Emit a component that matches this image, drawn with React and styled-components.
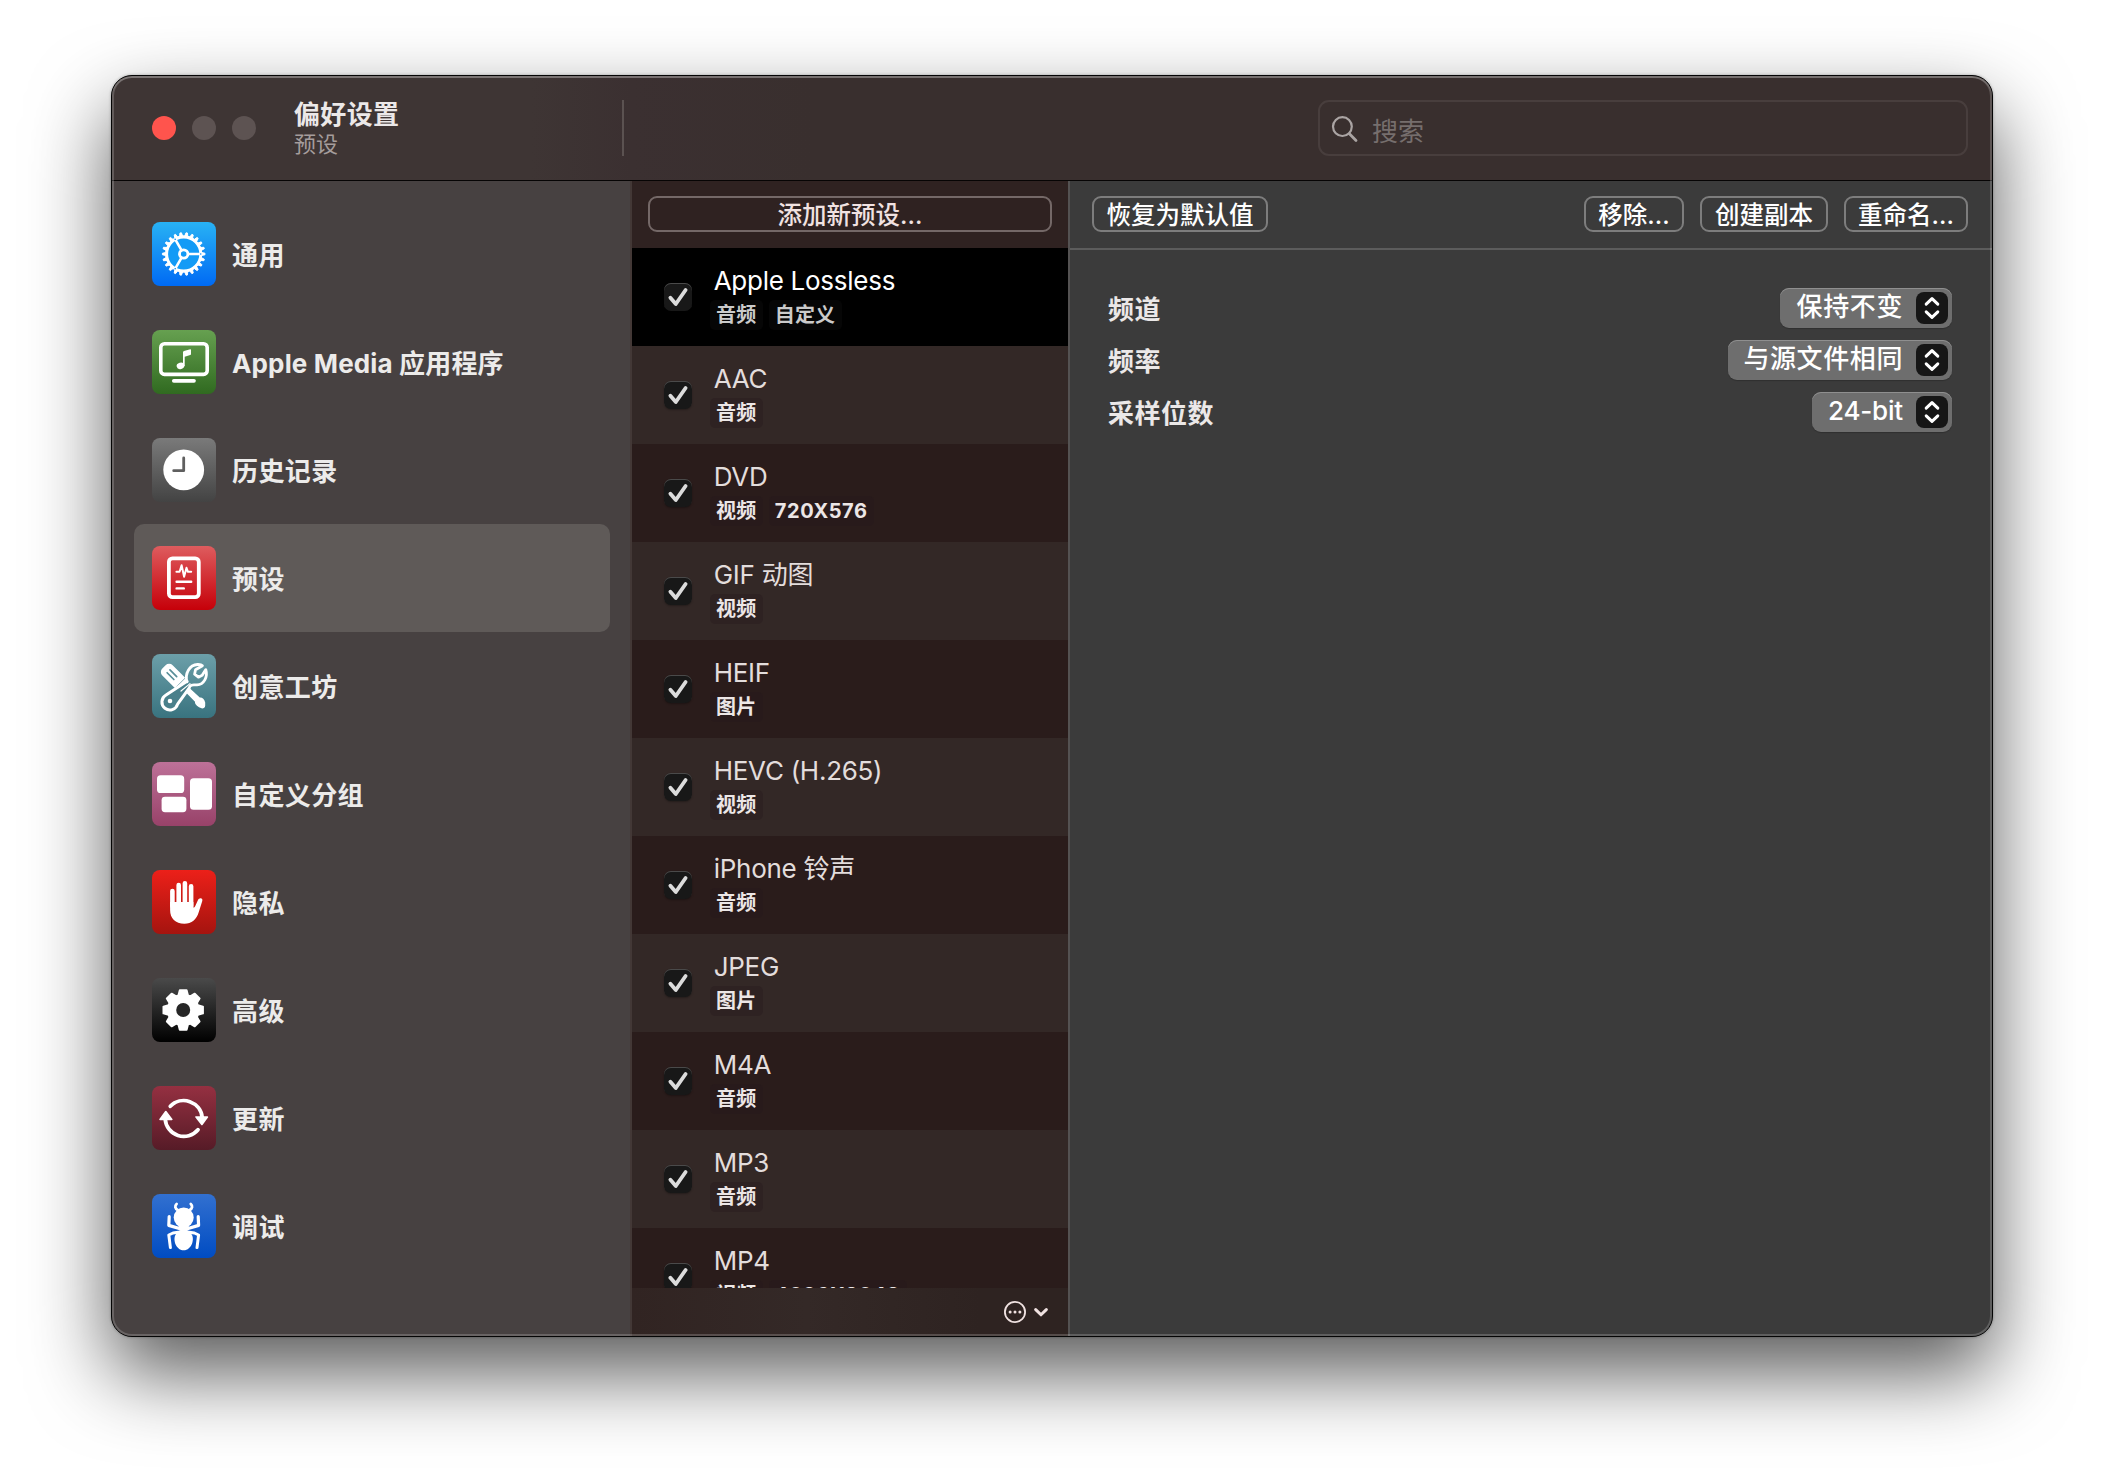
import React from 'react';
import styled, { createGlobalStyle } from 'styled-components';

const GlobalStyle = createGlobalStyle`
  *, *::before, *::after { box-sizing: border-box; }
  body {
    margin: 0;
    background: #fff;
    font-family: Inter, 'Noto Sans CJK SC', sans-serif;
    color: #ebe8e8;
    -webkit-font-smoothing: antialiased;
  }
  button { font-family: inherit; margin: 0; }
`;

const Desktop = styled.main`
  width: 2104px;
  height: 1484px;
  padding: 75px 111px 0;
  overflow: hidden;
`;

const Window = styled.div`
  position: relative;
  display: flex;
  flex-direction: column;
  width: 1882px;
  height: 1262px;
  border: 1px solid #050505;
  border-radius: 21px;
  overflow: hidden;
  background: #3b3b3b;
  box-shadow: 0 36px 80px rgba(0, 0, 0, 0.65), 0 0 3px rgba(0, 0, 0, 0.3);

  &::after {
    content: '';
    position: absolute;
    inset: 0;
    border-radius: 20px;
    pointer-events: none;
    box-shadow: inset 0 0 0 2px rgba(255, 255, 255, 0.19), inset 0 2px 0 rgba(255, 255, 255, 0.16);
  }
`;

const TitleBar = styled.header`
  flex: none;
  display: flex;
  align-items: center;
  height: 105px;
  padding: 0 24px 0 40px;
  border-bottom: 1px solid #060404;
  background: linear-gradient(90deg, #3e3534 0, #3e3534 420px, #3b3031 520px, #392f2e 700px);
`;

const Lights = styled.div`
  display: flex;
  gap: 16px;
`;

const Light = styled.span`
  width: 24px;
  height: 24px;
  border-radius: 50%;
  background: ${(p) => p.$color};
`;

const Titles = styled.div`
  width: 328px;
  margin-left: 38px;
  padding-bottom: 1px;
`;

const Title = styled.h1`
  margin: 0;
  font-size: 26px;
  line-height: 32px;
  font-weight: 700;
  letter-spacing: 0.35px;
  color: #ebe8e8;
`;

const Subtitle = styled.p`
  margin: 0;
  font-size: 22px;
  line-height: 26px;
  color: #a59d9c;
`;

const TitleRule = styled.span`
  width: 2px;
  height: 56px;
  background: #5b5251;
`;

const Search = styled.label`
  display: flex;
  align-items: center;
  gap: 13px;
  width: 650px;
  height: 56px;
  margin-left: auto;
  padding: 2px 10px 0 11px;
  border: 2px solid #483e3d;
  border-radius: 11px;
  font-size: 26px;
  color: #766e6d;

  svg { margin-top: -1px; }
`;

const Body = styled.div`
  flex: 1;
  display: flex;
  min-height: 0;
`;

const Sidebar = styled.nav`
  width: 520px;
  padding: 19px 20px 0 22px;
  background: #474141;
  border-right: 2px solid #433836;
`;

const SideItem = styled.div`
  display: flex;
  align-items: center;
  gap: 16px;
  height: 108px;
  padding-left: 18px;
  border-radius: 10px;
  background: ${(p) => (p.$active ? '#5f5a58' : 'transparent')};
`;

const SideLabel = styled.span`
  padding-top: 3px;
  font-size: 26px;
  line-height: 36px;
  font-weight: 700;
  letter-spacing: ${(p) => p.$tracking || '0.4px'};
  color: #ecebea;
`;

const Tile = styled.span`
  flex: none;
  width: 64px;
  height: 64px;
  border-radius: 8px;
  overflow: hidden;
  background: linear-gradient(${(p) => p.$from}, ${(p) => p.$to});

  svg { display: block; }
`;

const Presets = styled.section`
  display: flex;
  flex-direction: column;
  width: 436px;
  background: #2f2221;
`;

const PresetsHead = styled.div`
  flex: none;
  display: flex;
  height: 67px;
  padding: 15px 16px 16px;
`;

const Button = styled.button`
  flex: ${(p) => (p.$fill ? 1 : 'none')};
  width: ${(p) => (p.$width ? `${p.$width}px` : 'auto')};
  height: 36px;
  padding: 2px 0 0;
  border: 2px solid ${(p) => (p.$warm ? '#746867' : '#7d7d7d')};
  border-radius: 9px;
  background: transparent;
  color: ${(p) => (p.$warm ? '#f1e2e1' : '#fff')};
  font-size: 24.5px;
  line-height: 30px;
  font-weight: 500;
  white-space: nowrap;
`;

const PresetList = styled.div`
  flex: 1;
  min-height: 0;
  overflow: hidden;
`;

const PresetRow = styled.div`
  display: flex;
  align-items: flex-start;
  height: 98px;
  padding: 0 32px;
  background: ${(p) => (p.$active ? '#000' : p.$odd ? '#332826' : '#2a1c1b')};
  color: ${(p) => (p.$active ? '#fff' : '#e3dddc')};
`;

const Check = styled.span`
  flex: none;
  display: block;
  width: 28px;
  height: 28px;
  margin-top: 35px;
  border-radius: 7px;
  background: #181818;
  box-shadow: inset 0 1px 0 rgba(255, 255, 255, 0.22), 0 1px 2px rgba(0, 0, 0, 0.3);

  svg { display: block; }
`;

const PresetText = styled.div`
  margin-left: 18px;
  padding-top: 15px;
`;

const PresetName = styled.div`
  padding-left: 3.7px;
  font-size: 26px;
  line-height: 36px;
  letter-spacing: -0.27px;
  white-space: nowrap;
`;

const Badges = styled.div`
  display: flex;
  gap: 6px;
  margin-top: 1px;
`;

const Badge = styled.span`
  height: 30px;
  padding: 0 6.5px 0 6px;
  border-radius: 5px;
  background: ${(p) => (p.$active ? '#060606' : 'rgba(36, 24, 28, 0.35)')};
  color: ${(p) => (p.$active ? '#cbcbcb' : '#ece6e6')};
  font-size: 20px;
  line-height: 30px;
  font-weight: 700;
  letter-spacing: ${(p) => (p.$numeric ? '0.55px' : '0.15px')};
  white-space: nowrap;
`;

const PresetsFoot = styled.div`
  flex: none;
  display: flex;
  align-items: center;
  justify-content: flex-end;
  gap: 7px;
  height: 48px;
  padding-right: 20px;
  background: linear-gradient(90deg, #312422, #342927 40%, #2e2321 80%);
`;

const Detail = styled.section`
  flex: 1;
  border-left: 2px solid #545252;
  background: #3b3b3b;
`;

const DetailHead = styled.div`
  display: flex;
  gap: 16px;
  height: 69px;
  padding: 15px 24px 0 22px;
  border-bottom: 2px solid #5c5c5c;

  button:first-child { margin-right: auto; }
`;

const Form = styled.div`
  display: flex;
  flex-direction: column;
  gap: 12px;
  padding: 38px 40px 0 38px;
`;

const Field = styled.div`
  display: flex;
  align-items: center;
  justify-content: space-between;
  height: 40px;
`;

const FieldLabel = styled.span`
  padding-top: 4px;
  font-size: 26px;
  line-height: 36px;
  font-weight: 700;
  letter-spacing: 0.5px;
`;

const Popup = styled.div`
  display: flex;
  align-items: flex-start;
  justify-content: flex-end;
  gap: 13px;
  width: ${(p) => p.$width}px;
  height: 40px;
  padding: 4px 4px 0 0;
  border-radius: 9px;
  background: #6e6e6e;
  box-shadow: inset 0 1px 0 #8f8f8f, 0 1px 1px rgba(0, 0, 0, 0.2);
  color: #fff;
  font-size: 26px;
  line-height: 30px;
  font-weight: 500;
  letter-spacing: ${(p) => p.$tracking || '0.6px'};
  white-space: nowrap;
`;

const Stepper = styled.span`
  display: block;
  width: 32px;
  height: 32px;
  border-radius: 8px;
  background: #161616;

  svg { display: block; }
`;

const teeth = (count, inner, outer, base, top) => {
  const points = [];
  for (let i = 0; i < count; i += 1) {
    const a = (i * 2 * Math.PI) / count;
    [[inner, -base], [outer, -top], [outer, top], [inner, base]].forEach(([r, d]) => {
      points.push(`${(32 + r * Math.cos(a + d)).toFixed(2)},${(32 + r * Math.sin(a + d)).toFixed(2)}`);
    });
  }
  return points.join(' ');
};

const Glyph = ({ children }) => (
  <svg width="64" height="64" viewBox="0 0 64 64" fill="none" stroke="#fff" strokeLinecap="round" strokeLinejoin="round">
    {children}
  </svg>
);

const GearGlyph = () => (
  <Glyph>
    <g transform="translate(-0.3 0)">
      <polygon points={teeth(22, 18, 21.3, 0.085, 0.035)} fill="#fff" strokeWidth="1" />
      <circle cx="32" cy="32" r="16.4" fill="#139bf6" stroke="none" />
      <circle cx="32" cy="32" r="17" strokeWidth="2.8" />
      <circle cx="32" cy="32" r="4.2" strokeWidth="2.8" />
      {[0, 120, 240].map((a) => (
        <g key={a} transform={`rotate(${a} 32 32)`}>
          <path d="M36.5 32H47.5" strokeWidth="2.6" />
          <circle cx="49" cy="32" r="0.8" fill="#128ff5" stroke="none" />
        </g>
      ))}
    </g>
  </Glyph>
);

const MediaGlyph = () => (
  <Glyph>
    <rect x="8.8" y="13.8" width="46.4" height="30.6" rx="3.6" strokeWidth="3.6" />
    <path d="M21.8 50.8H42" strokeWidth="3.7" />
    <ellipse cx="28.5" cy="35.8" rx="3.9" ry="3.2" transform="rotate(-15 28.5 35.8)" fill="#fff" stroke="none" />
    <path d="M31 22.4Q31 21.3 32 21L38.2 19.2Q39 19 39 19.9V24Q39 24.8 38.2 25L32.7 26.8V36H31Z" fill="#fff" stroke="none" />
  </Glyph>
);

const ClockGlyph = () => (
  <Glyph>
    <circle cx="31.7" cy="31.8" r="20.4" fill="#fff" stroke="none" />
    <path d="M31.7 20V32.7H21.7" stroke="#5f5f5f" strokeWidth="2.8" />
  </Glyph>
);

const PresetGlyph = () => (
  <Glyph>
    <rect x="16.9" y="12.3" width="29.9" height="38.9" rx="3.6" strokeWidth="3.8" />
    <path d="M24.4 25.8H27.6L29.6 19.2L32.1 30.8L34.5 21.8L36 25.8H39.2" strokeWidth="2" />
    <path d="M24.6 35.8H39.2M24.6 42.4H31.8" strokeWidth="2.4" />
  </Glyph>
);

const ToolsGlyph = () => (
  <Glyph>
    <g transform="rotate(45 21.5 22.3)">
      <rect x="8" y="15" width="27" height="14.6" rx="5" fill="#fff" stroke="none" />
      <path d="M14.5 20.3H24M14.5 24.3H24" stroke="#588e98" strokeWidth="1.7" />
      <path d="M31 15.4V29.2" stroke="#588e98" strokeWidth="0.7" />
    </g>
    <path d="M35 27.3L14 41A8 8 0 1 0 25.6 50.2L37.3 33.8" fill="#4a808b" strokeWidth="3" />
    <path d="M29 37L38 29.6" strokeWidth="1.2" />
    <path d="M35 27.8C32.6 19.8 37.5 10.8 45.5 10.5C47.3 10.4 49.6 10.9 50.4 11.8L43.5 15.8L42.6 20.2L46.4 23.2L50.2 21.3L53.8 15.6C56 22.8 52 30.6 45 30.9C41.5 31 39.6 30 37.8 32.4" strokeWidth="2.8" />
    <circle cx="18" cy="47" r="2.3" fill="#fff" stroke="none" />
    <path d="M34.2 38.8L38.3 34.8L47.8 43.6C50 43.2 52.3 45 53.2 48.4L53.2 51.8C53 53.6 51.8 54.6 50.2 54.6L47 53.2C43.8 51 42.6 49.6 43 47.8Z" fill="#fff" stroke="none" />
  </Glyph>
);

const GroupsGlyph = () => (
  <Glyph>
    <g fill="#fff" stroke="none">
      <rect x="5" y="13.3" width="27.2" height="17.8" rx="3.6" />
      <rect x="9.6" y="34.8" width="24.8" height="15.4" rx="3.4" />
      <rect x="38" y="16.2" width="22" height="31.6" rx="3.6" />
    </g>
  </Glyph>
);

const HandGlyph = () => (
  <Glyph>
    <path d="M20.4 21V36M26.7 15V33M32.9 13.3V33M39.1 16.3V36" strokeWidth="4.6" />
    <path d="M18.1 32H41.4V37.6C42.4 37.4 43 36.6 43.6 35.2L46 30C46.6 28.6 47.8 27.9 49 28.2C50.4 28.6 50.6 29.8 50.2 31.2L46.8 42C44.6 49.6 39.6 53.7 32.4 53.7C23.4 53.7 18.1 48.4 18.1 40Z" fill="#fff" stroke="none" />
  </Glyph>
);

const CogGlyph = () => (
  <Glyph>
    <g transform="translate(-0.8 0)">
      <polygon points={teeth(8, 15.4, 20, 0.31, 0.17)} fill="#fff" strokeWidth="2" />
      <circle cx="32" cy="32" r="7" fill="#262626" stroke="none" />
    </g>
  </Glyph>
);

const RefreshGlyph = () => (
  <Glyph>
    <path d="M18.3 20.3A18.6 18.6 0 0 1 50.2 31.5M46 43.8A18.6 18.6 0 0 1 13.2 33" strokeWidth="3.8" />
    <path d="M44 31H55.4L49.9 38.5ZM8 33.4H19.8L13.8 25.6Z" fill="#fff" strokeWidth="1.6" />
  </Glyph>
);

const BugGlyph = () => (
  <Glyph>
    <g fill="#fff" stroke="none">
      <circle cx="31.7" cy="23.6" r="10" />
      <path d="M27 31H36.4L37.4 34.5L35 36.3L38.6 38H24.8L28.4 36.3L26 34.5Z" />
      <path d="M24.5 39.4C27 36.6 36.4 36.6 38.9 39.4C43.5 44 39.8 56.2 31.7 56.2C23.6 56.2 19.9 44 24.5 39.4Z" />
    </g>
    {[1, -1].map((s) => (
      <g key={s} transform={s === 1 ? undefined : 'translate(63.4 0) scale(-1 1)'}>
        <path d="M26.2 16.2C22.6 14.8 22.8 11.6 24.6 10" strokeWidth="2.8" />
        <path d="M17.2 22.6L16.8 31.4L29 35" strokeWidth="3.2" />
        <path d="M18.4 53.6L16.8 41L21 39L28 38" strokeWidth="3" />
      </g>
    ))}
  </Glyph>
);

const CheckMark = () => (
  <svg width="28" height="28" viewBox="0 0 28 28" fill="none" stroke="#dcdcdc" strokeWidth="3.8" strokeLinecap="round" strokeLinejoin="round">
    <path d="M6.4 14.8L11.8 21L21.6 7" />
  </svg>
);

const Arrows = () => (
  <svg width="32" height="32" viewBox="0 0 32 32" fill="none" stroke="#fff" strokeWidth="3" strokeLinecap="round" strokeLinejoin="round">
    <path d="M10.2 12.2L16 6.6L21.8 12.2M10.2 19.8L16 25.4L21.8 19.8" />
  </svg>
);

const sections = [
  { label: '通用', icon: GearGlyph, from: '#28b2f4', to: '#006af4' },
  { label: 'Apple Media 应用程序', icon: MediaGlyph, from: '#66a050', to: '#306a20', tracking: '0.15px' },
  { label: '历史记录', icon: ClockGlyph, from: '#7a7a7a', to: '#434343' },
  { label: '预设', icon: PresetGlyph, from: '#de5c5e', to: '#c60009', active: true },
  { label: '创意工坊', icon: ToolsGlyph, from: '#6c9fa9', to: '#39737f' },
  { label: '自定义分组', icon: GroupsGlyph, from: '#bd7198', to: '#984269' },
  { label: '隐私', icon: HandGlyph, from: '#ec2019', to: '#a5140f' },
  { label: '高级', icon: CogGlyph, from: '#4a4a4a', to: '#000000' },
  { label: '更新', icon: RefreshGlyph, from: '#953041', to: '#561b27' },
  { label: '调试', icon: BugGlyph, from: '#3270d0', to: '#004cc2' },
];

const presets = [
  { name: 'Apple Lossless', tags: ['音频', '自定义'], active: true },
  { name: 'AAC', tags: ['音频'] },
  { name: 'DVD', tags: ['视频', '720X576'] },
  { name: 'GIF 动图', tags: ['视频'] },
  { name: 'HEIF', tags: ['图片'] },
  { name: 'HEVC (H.265)', tags: ['视频'] },
  { name: 'iPhone 铃声', tags: ['音频'] },
  { name: 'JPEG', tags: ['图片'] },
  { name: 'M4A', tags: ['音频'] },
  { name: 'MP3', tags: ['音频'] },
  { name: 'MP4', tags: ['视频', '4096X2048'] },
];

const fields = [
  { label: '频道', value: '保持不变', width: 172 },
  { label: '频率', value: '与源文件相同', width: 224 },
  { label: '采样位数', value: '24-bit', width: 140, tracking: '-0.2px' },
];

export default function App() {
  return (
    <>
      <GlobalStyle />
      <Desktop>
        <Window>
          <TitleBar>
            <Lights>
              <Light $color="#ff544d" />
              <Light $color="#5d5352" />
              <Light $color="#5d5352" />
            </Lights>
            <Titles>
              <Title>偏好设置</Title>
              <Subtitle>预设</Subtitle>
            </Titles>
            <TitleRule />
            <Search>
              <svg width="28" height="28" viewBox="0 0 28 28" fill="none" stroke="#aaa4a3" strokeLinecap="round">
                <circle cx="11.4" cy="11.6" r="9.4" strokeWidth="2.2" />
                <path d="M18.4 18.8L25 25.4" strokeWidth="2.8" />
              </svg>
              搜索
            </Search>
          </TitleBar>
          <Body>
            <Sidebar>
              {sections.map(({ label, icon: Icon, from, to, active, tracking }) => (
                <SideItem key={label} $active={active}>
                  <Tile $from={from} $to={to}><Icon /></Tile>
                  <SideLabel $tracking={tracking}>{label}</SideLabel>
                </SideItem>
              ))}
            </Sidebar>
            <Presets>
              <PresetsHead>
                <Button $fill $warm>添加新预设...</Button>
              </PresetsHead>
              <PresetList>
                {presets.map(({ name, tags, active }, i) => (
                  <PresetRow key={name} $active={active} $odd={i % 2 === 1}>
                    <Check><CheckMark /></Check>
                    <PresetText>
                      <PresetName>{name}</PresetName>
                      <Badges>
                        {tags.map((tag) => (
                          <Badge key={tag} $active={active} $numeric={/\d/.test(tag)}>{tag}</Badge>
                        ))}
                      </Badges>
                    </PresetText>
                  </PresetRow>
                ))}
              </PresetList>
              <PresetsFoot>
                <svg width="24" height="24" viewBox="0 0 24 24" fill="none" stroke="#f0e2e1" strokeWidth="1.8">
                  <circle cx="12" cy="12" r="10.1" />
                  <g fill="#f0e2e1" stroke="none">
                    <circle cx="7.1" cy="12" r="1.5" />
                    <circle cx="12" cy="12" r="1.5" />
                    <circle cx="16.9" cy="12" r="1.5" />
                  </g>
                </svg>
                <svg width="14" height="10" viewBox="0 0 14 10" fill="none" stroke="#f0e2e1" strokeWidth="3" strokeLinecap="round" strokeLinejoin="round">
                  <path d="M1.7 2.6L7 7.8L12.3 2.6" />
                </svg>
              </PresetsFoot>
            </Presets>
            <Detail>
              <DetailHead>
                <Button $width={176}>恢复为默认值</Button>
                <Button $width={100}>移除...</Button>
                <Button $width={128}>创建副本</Button>
                <Button $width={124}>重命名...</Button>
              </DetailHead>
              <Form>
                {fields.map(({ label, value, width, tracking }) => (
                  <Field key={label}>
                    <FieldLabel>{label}</FieldLabel>
                    <Popup $width={width} $tracking={tracking}>
                      <span>{value}</span>
                      <Stepper><Arrows /></Stepper>
                    </Popup>
                  </Field>
                ))}
              </Form>
            </Detail>
          </Body>
        </Window>
      </Desktop>
    </>
  );
}
